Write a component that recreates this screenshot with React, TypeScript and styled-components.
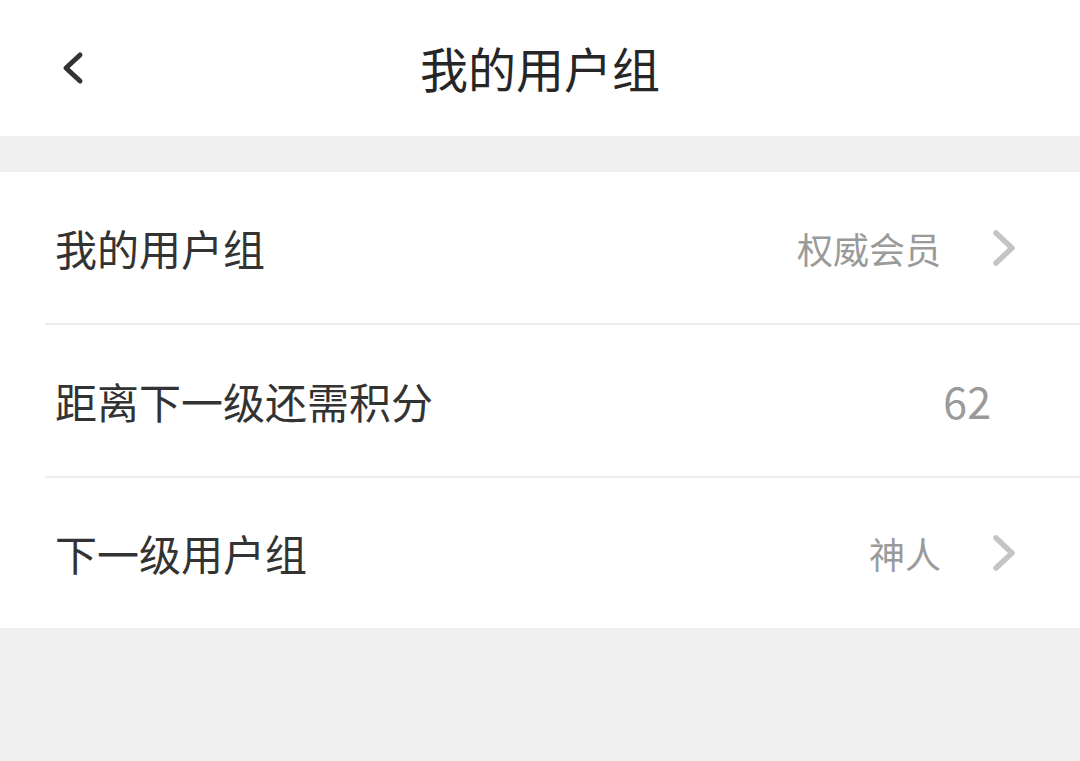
import React from "react";
import styled, { createGlobalStyle } from "styled-components";

const Global = createGlobalStyle`
  html, body { margin: 0; padding: 0; background: #f0f0f0; }
  body { font-family: "Noto Sans CJK SC", "Noto Sans", sans-serif; }
  * { box-sizing: border-box; }
`;

const Page = styled.div`
  width: 1080px;
  min-height: 761px;
  background: #f0f0f0;
  display: flex;
  flex-direction: column;
`;

const Header = styled.header`
  height: 136px;
  background: #fff;
  display: grid;
  grid-template-columns: 136px 1fr 136px;
  align-items: center;
`;

const BackButton = styled.button`
  border: 0;
  background: none;
  padding: 0 0 0 60px;
  height: 100%;
  display: flex;
  align-items: center;
  cursor: pointer;
`;

const Title = styled.h1`
  margin: 0;
  text-align: center;
  font-size: 48px;
  font-weight: 400;
  color: #262626;
  line-height: 1;
  padding-bottom: 2px;
`;

const List = styled.section`
  margin-top: 36px;
  background: #fff;
  display: flex;
  flex-direction: column;
`;

const Row = styled.div<{ $divider?: boolean }>`
  height: ${(p) => (p.$divider ? 153 : 150)}px;
  margin-left: 45px;
  padding: 0 62px 0 10px;
  display: flex;
  align-items: center;
  border-bottom: ${(p) => (p.$divider ? "2px solid #ececec" : "none")};
`;

const Label = styled.span`
  flex: 1;
  font-size: 42px;
  color: #333;
  line-height: 1;
`;

const Value = styled.span<{ $num?: boolean }>`
  font-size: ${(p) => (p.$num ? 43 : 36)}px;
  color: #9a9a9a;
  line-height: 1;
  margin-right: ${(p) => (p.$num ? 27 : 0)}px;
`;

const Arrow = styled.svg`
  margin-left: 51px;
  width: 26px;
  height: 38px;
`;

const Chevron = () => (
  <Arrow viewBox="0 0 26 38">
    <path d="M4 4 L20 19 L4 34" fill="none" stroke="#c4c4c4" strokeWidth="5.5" strokeLinecap="round" strokeLinejoin="round" />
  </Arrow>
);

export default function App() {
  return (
    <Page>
      <Global />
      <Header>
        <BackButton aria-label="返回">
          <svg width="26" height="36" viewBox="0 0 26 36">
            <path d="M20 5 L6 18 L20 31" fill="none" stroke="#333" strokeWidth="5" strokeLinecap="round" strokeLinejoin="round" />
          </svg>
        </BackButton>
        <Title>我的用户组</Title>
        <div />
      </Header>
      <List>
        <Row $divider>
          <Label>我的用户组</Label>
          <Value>权威会员</Value>
          <Chevron />
        </Row>
        <Row $divider>
          <Label>距离下一级还需积分</Label>
          <Value $num>62</Value>
        </Row>
        <Row>
          <Label>下一级用户组</Label>
          <Value>神人</Value>
          <Chevron />
        </Row>
      </List>
    </Page>
  );
}
